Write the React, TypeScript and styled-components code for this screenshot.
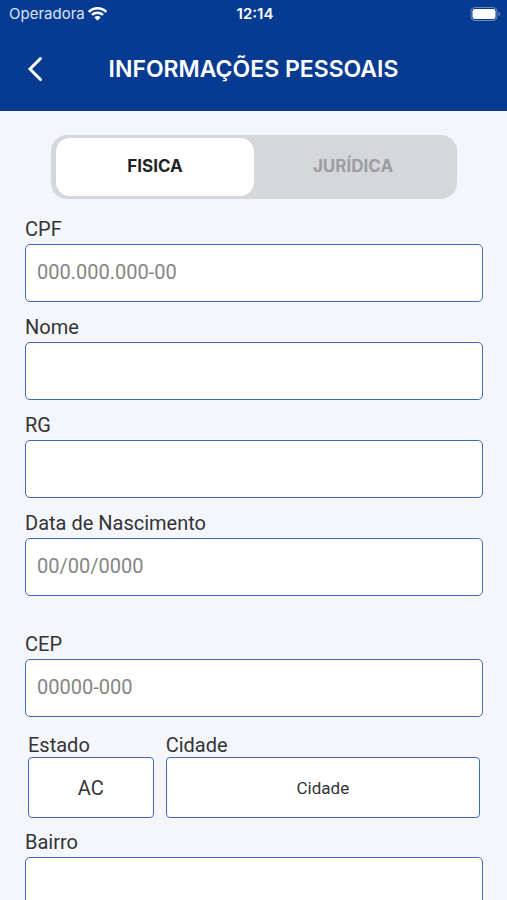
import React, { useId, useState } from 'react';
import styled, { createGlobalStyle } from 'styled-components';

const color = {
  brand: '#073b92',
  border: '#3f6db3',
  page: '#f4f6fb',
  track: '#d5d7db',
  text: '#333436',
  muted: '#9b9da1',
  placeholder: '#858585',
};

const GlobalStyle = createGlobalStyle`
  *, *::before, *::after { box-sizing: border-box; }
  body {
    margin: 0;
    background: ${color.page};
    color: ${color.text};
    font-family: Roboto, sans-serif;
  }
`;

const Screen = styled.div`
  display: flex;
  flex-direction: column;
  height: 100vh;
`;

const Header = styled.header`
  flex: none;
  background: ${color.brand};
  color: #fff;
  font-family: Inter, sans-serif;
`;

const StatusBar = styled.div`
  display: grid;
  grid-template-columns: 1fr auto 1fr;
  align-items: center;
  height: 27px;
  padding: 0 6px 0 9px;
  font-size: 15px;
  line-height: 20px;
`;

const Carrier = styled.div`
  display: flex;
  align-items: center;
  gap: 3px;
  color: #dbe5f6;
`;

const Clock = styled.time`
  font-weight: 600;
`;

const Battery = styled.div`
  display: flex;
  justify-content: flex-end;
`;

const NavBar = styled.div`
  display: grid;
  grid-template-columns: 46px 1fr 46px;
  align-items: center;
  height: 84px;
  padding: 0 12px;
`;

const BackButton = styled.button`
  display: grid;
  place-items: center;
  height: 48px;
  padding: 0;
  border: 0;
  background: none;
  color: inherit;
  cursor: pointer;
`;

const Title = styled.h1`
  margin: 0;
  font-size: 23px;
  line-height: 28px;
  font-weight: 600;
  text-align: center;
  white-space: nowrap;
`;

const Content = styled.main`
  flex: 1;
  min-height: 0;
  overflow-y: auto;
  scrollbar-width: none;
  padding: 24px 24px 40px 25px;
`;

const Segmented = styled.div`
  display: flex;
  height: 64px;
  margin: 0 26px 16px;
  padding: 3px 5px;
  border-radius: 16px;
  background: ${color.track};
`;

const Segment = styled.button<{ $active: boolean }>`
  flex: 1;
  padding: 0 0 2px;
  border: 0;
  border-radius: 14px;
  background: ${({ $active }) => ($active ? '#fff' : 'transparent')};
  color: ${({ $active }) => ($active ? '#222324' : color.muted)};
  font: 700 17px/24px Inter, sans-serif;
  cursor: pointer;
`;

const Group = styled.div`
  display: flex;
  flex-direction: column;
  gap: 11px;
`;

const Field = styled.div`
  display: flex;
  flex-direction: column;
`;

const Label = styled.label<{ $tight?: boolean }>`
  height: ${({ $tight }) => ($tight ? '26px' : '29px')};
  font-size: 20px;
  line-height: 28px;
`;

const Input = styled.input`
  width: 100%;
  height: 58px;
  padding: 0 11px 2px;
  border: 1px solid ${color.border};
  border-radius: 5px;
  background: #fff;
  color: ${color.text};
  font: 400 20px/24px Roboto, sans-serif;

  &::placeholder {
    color: ${color.placeholder};
    opacity: 1;
  }
`;

const Address = styled(Group)`
  gap: 10px;
  margin-top: 34px;
`;

const Place = styled.div`
  display: grid;
  grid-template-columns: 2fr 5fr;
  gap: 12px;
  margin: 4px 3px 0;
`;

const Select = styled.select<{ $small?: boolean }>`
  appearance: none;
  width: 100%;
  height: 61px;
  padding: 0 12px;
  border: 1px solid ${color.border};
  border-radius: 4px;
  background: #fff;
  color: ${color.text};
  font: 400 ${({ $small }) => ($small ? '17px' : '20px')}/24px Roboto, sans-serif;
  text-align: center;
  text-align-last: center;
`;

function WifiIcon() {
  return (
    <svg width="19" height="14" viewBox="0 0 19 14" fill="#fff" aria-hidden="true">
      <path d="M9.5 0C5.900 0 2.600 1.400.2 3.700a.5.5 0 0 0 0 .7l1.100 1.100c.2.200.5.200.7 0A10.800 10.800 0 0 1 9.500 2.500c2.900 0 5.500 1.100 7.500 3 .2.200.5.200.7 0l1.100-1.100a.5.5 0 0 0 0-.7A13.400 13.400 0 0 0 9.500 0Z" />
      <path d="M9.500 4.500c-2.300 0-4.400.9-6 2.300a.5.5 0 0 0 0 .7l1.100 1.100c.2.200.5.200.7 0a6.300 6.300 0 0 1 8.400 0c.2.200.5.200.7 0l1.100-1.100a.5.5 0 0 0 0-.7 8.900 8.900 0 0 0-6-2.300Z" />
      <path d="M9.500 9c-1.100 0-2.100.4-2.800 1a.5.5 0 0 0 0 .8l2.400 2.500c.2.200.6.200.8 0l2.400-2.500a.5.5 0 0 0 0-.8c-.7-.6-1.700-1-2.800-1Z" />
    </svg>
  );
}

function BatteryIcon() {
  return (
    <svg width="31" height="14" viewBox="0 0 31 14" fill="none" aria-hidden="true">
      <rect x="1" y=".5" width="26" height="13" rx="4" stroke="#fff" strokeOpacity=".4" />
      <rect x="2.500" y="2" width="23" height="10" rx="2.500" fill="#fff" />
      <path d="M28.500 5v4c1-.3 1.600-1.100 1.600-2s-.6-1.700-1.600-2Z" fill="#fff" fillOpacity=".4" />
    </svg>
  );
}

function BackIcon() {
  return (
    <svg width="16" height="26" viewBox="0 0 16 26" fill="none" aria-hidden="true">
      <path d="M13.500 2.500 3 13l10.500 10.500" stroke="#fff" strokeWidth="3" strokeLinecap="round" strokeLinejoin="miter" />
    </svg>
  );
}

function TextField({ label, placeholder }: { label: string; placeholder?: string }) {
  const id = useId();
  return (
    <Field>
      <Label htmlFor={id}>{label}</Label>
      <Input id={id} type="text" placeholder={placeholder} />
    </Field>
  );
}

function SelectField({ label, option, small }: { label: string; option: string; small?: boolean }) {
  const id = useId();
  return (
    <Field>
      <Label htmlFor={id} $tight>{label}</Label>
      <Select id={id} $small={small}>
        <option>{option}</option>
      </Select>
    </Field>
  );
}

const personTypes = ['FISICA', 'JURÍDICA'];

export default function App() {
  const [personType, setPersonType] = useState(personTypes[0]);

  return (
    <Screen>
      <GlobalStyle />
      <Header>
        <StatusBar>
          <Carrier>
            Operadora
            <WifiIcon />
          </Carrier>
          <Clock>12:14</Clock>
          <Battery>
            <BatteryIcon />
          </Battery>
        </StatusBar>
        <NavBar>
          <BackButton type="button" aria-label="Voltar">
            <BackIcon />
          </BackButton>
          <Title>INFORMAÇÕES PESSOAIS</Title>
        </NavBar>
      </Header>
      <Content>
        <Segmented role="group" aria-label="Tipo de pessoa">
          {personTypes.map((type) => (
            <Segment
              key={type}
              type="button"
              $active={type === personType}
              aria-pressed={type === personType}
              onClick={() => setPersonType(type)}
            >
              {type}
            </Segment>
          ))}
        </Segmented>
        <Group>
          <TextField label="CPF" placeholder="000.000.000-00" />
          <TextField label="Nome" />
          <TextField label="RG" />
          <TextField label="Data de Nascimento" placeholder="00/00/0000" />
        </Group>
        <Address>
          <TextField label="CEP" placeholder="00000-000" />
          <Place>
            <SelectField label="Estado" option="AC" />
            <SelectField label="Cidade" option="Cidade" small />
          </Place>
          <TextField label="Bairro" />
        </Address>
      </Content>
    </Screen>
  );
}
